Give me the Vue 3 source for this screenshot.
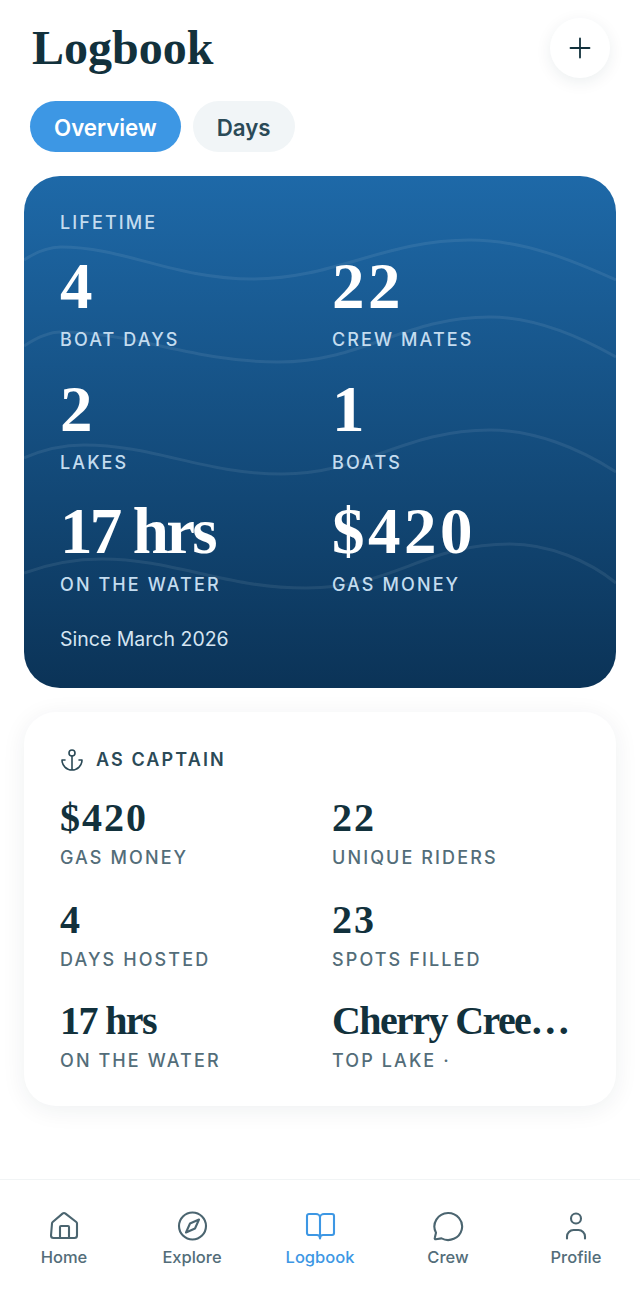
<script setup>
const hero = [
  { value: '4', label: 'BOAT DAYS' },
  { value: '22', label: 'CREW MATES' },
  { value: '2', label: 'LAKES' },
  { value: '1', label: 'BOATS' },
  { value: '17 hrs', label: 'ON THE WATER', tight: true },
  { value: '$420', label: 'GAS MONEY' },
]
const captain = [
  { value: '$420', label: 'GAS MONEY' },
  { value: '22', label: 'UNIQUE RIDERS' },
  { value: '4', label: 'DAYS HOSTED' },
  { value: '23', label: 'SPOTS FILLED' },
  { value: '17 hrs', label: 'ON THE WATER', tight: true },
  { value: 'Cherry Cree…', label: 'TOP LAKE ·', tight: true },
]
const waves = [
  'M0 84C12 76 25 71 37 71C100 71 150 103 229 103C310 103 360 64 446 64C500 64 550 85 592 104',
  'M0 170C12 162 25 156 37 156C110 156 170 186 254 186C340 186 380 141 466 141C510 141 555 160 592 181',
  'M0 282C18 274 38 269 60 269C130 269 180 298 258 298C340 298 380 254 466 254C510 254 555 272 592 296',
  'M0 397C22 389 50 383 78 383C150 383 200 412 282 412C370 412 400 368 486 368C525 368 565 385 592 407',
]
</script>

<template>
  <div class="page">
    <header class="top">
      <h1>Logbook</h1>
      <button class="add" aria-label="Add">
        <svg width="24" height="24" viewBox="0 0 24 24" fill="none" stroke="#12313c" stroke-width="1.800" stroke-linecap="round"><path d="M12 2.500v19M2.500 12h19"/></svg>
      </button>
    </header>
    <div class="tabs">
      <span class="tab active">Overview</span>
      <span class="tab">Days</span>
    </div>

    <section class="hero">
      <svg class="waves" width="592" height="512" viewBox="0 0 592 512" fill="none" stroke="#fff" stroke-opacity=".08" stroke-width="3">
        <path v-for="d in waves" :key="d" :d="d"/>
      </svg>
      <div class="eyebrow">LIFETIME</div>
      <div class="hero-grid">
        <div v-for="s in hero" :key="s.label" class="hero-stat">
          <div class="hero-value" :class="{ tight: s.tight }">{{ s.value }}</div>
          <div class="hero-label">{{ s.label }}</div>
        </div>
      </div>
      <div class="since">Since March 2026</div>
    </section>

    <section class="card">
      <div class="card-head">
        <svg width="24" height="24" viewBox="0 0 24 24" fill="none" stroke="#2b4a57" stroke-width="1.600" stroke-linecap="round" stroke-linejoin="round"><circle cx="12" cy="5" r="3"/><path d="M12 8v14M5 12H2a10 10 0 0 0 20 0h-3"/></svg>
        <span>AS CAPTAIN</span>
      </div>
      <div class="card-grid">
        <div v-for="s in captain" :key="s.label" class="card-stat">
          <div class="card-value" :class="{ tight: s.tight }">{{ s.value }}</div>
          <div class="card-label">{{ s.label }}</div>
        </div>
      </div>
    </section>

    <nav class="nav">
      <div class="nav-item">
        <svg viewBox="0 0 32 32"><path d="M4 13.500a2 2 0 0 1 .7-1.500L14.500 3.600a2.400 2.400 0 0 1 3 0L28.300 12a2 2 0 0 1 .7 1.500V25.500a2.500 2.500 0 0 1-2.500 2.500h-21A2.500 2.500 0 0 1 3 25.500Z"/><path d="M12 28V17a1 1 0 0 1 1-1h7a1 1 0 0 1 1 1v11"/></svg>
        <span>Home</span>
      </div>
      <div class="nav-item">
        <svg viewBox="0 0 32 32"><circle cx="16.500" cy="16" r="13.500"/><path d="M23 9.500l-4 9-9 4 4-9Z"/></svg>
        <span>Explore</span>
      </div>
      <div class="nav-item on">
        <svg viewBox="0 0 32 32"><path d="M16 7.500c0-2 2-3.500 4-3.500h8a2 2 0 0 1 2 2v17a2 2 0 0 1-2 2h-9c-1.500 0-3 1.500-3 3.500 0-2-1.500-3.500-3-3.500H5a2 2 0 0 1-2-2V6a2 2 0 0 1 2-2h7c2 0 4 1.500 4 3.500Zm0 0V28.500"/></svg>
        <span>Logbook</span>
      </div>
      <div class="nav-item">
        <svg viewBox="0 0 32 32"><path d="M16 3a14 13.500 0 1 1-6.500 25.400L3.800 29.200c-.9 0-1.300-.6-1-1.400l1.200-5.100A14 13.500 0 0 1 16 3Z"/></svg>
        <span>Crew</span>
      </div>
      <div class="nav-item">
        <svg viewBox="0 0 32 32"><circle cx="16" cy="8.500" r="5"/><path d="M7 28.500v-2a6.500 6.500 0 0 1 6.500-6.500h5a6.500 6.500 0 0 1 6.500 6.500v2"/></svg>
        <span>Profile</span>
      </div>
    </nav>
  </div>
</template>

<style>
html, body { margin: 0; background: #fff; }
</style>

<style scoped>
.page {
  height: 1314px;
  width: 640px;
  display: flex;
  flex-direction: column;
  background: #fff;
  font-family: Inter, "Liberation Sans", sans-serif;
  overflow: hidden;
}
.top {
  display: flex;
  justify-content: space-between;
  align-items: center;
  padding: 18px 30px 0 32px;
  height: 60px;
}
h1 {
  margin: 0;
  font: 700 48px/60px "Liberation Serif", serif;
  color: #12313c;
}
.add {
  width: 60px;
  height: 60px;
  padding: 0;
  border: 0;
  border-radius: 50%;
  background: #fff;
  box-shadow: 0 4px 16px rgba(18, 49, 60, .08);
  display: flex;
  align-items: center;
  justify-content: center;
}
.tabs {
  display: flex;
  gap: 12px;
  padding: 23px 30px 24px;
}
.tab {
  height: 51px;
  line-height: 53px;
  padding: 0 24px;
  border-radius: 26px;
  background: #f1f5f7;
  color: #2b4a57;
  font-size: 22.300px;
  font-weight: 600;
}
.tab.active { background: #3d97e4; color: #fff; }
.hero {
  position: relative;
  margin: 0 24px;
  height: 512px;
  box-sizing: border-box;
  padding: 36px 36px 0;
  border-radius: 36px;
  overflow: hidden;
  color: #fff;
  background: linear-gradient(180deg, #1e69a8 0%, #0b3357 100%);
}
.waves { position: absolute; left: 0; top: 0; }
.eyebrow, .hero-grid, .since { position: relative; }
.eyebrow {
  font-size: 18px;
  line-height: 22px;
  font-weight: 500;
  letter-spacing: 2.100px;
  color: #c4dcef;
}
.hero-grid {
  display: grid;
  grid-template-columns: 248px 248px;
  column-gap: 24px;
  row-gap: 18.500px;
  margin-top: 13px;
}
.hero-value {
  font: 700 65px/78px "Liberation Serif", serif;
  letter-spacing: 3.500px;
}
.hero-value.tight { letter-spacing: -2.800px; }
.hero-label {
  margin-top: 4px;
  font-size: 18px;
  line-height: 22px;
  font-weight: 500;
  letter-spacing: 2.100px;
  color: #c4dcef;
}
.since {
  margin-top: 31px;
  font-size: 19.500px;
  line-height: 24px;
  color: #d5e5f2;
}
.card {
  margin: 24px 24px 0;
  height: 394px;
  box-sizing: border-box;
  padding: 36px 36px 0;
  border-radius: 32px;
  background: #fff;
  box-shadow: 0 4px 24px rgba(18, 49, 60, .07);
}
.card-head {
  display: flex;
  align-items: center;
  gap: 12px;
  font-size: 18px;
  line-height: 24px;
  font-weight: 600;
  letter-spacing: 2.100px;
  color: #2b4a57;
}
.card-grid {
  display: grid;
  grid-template-columns: 248px 248px;
  column-gap: 24px;
  row-gap: 27.500px;
  margin-top: 23px;
}
.card-stat { min-width: 0; }
.card-value {
  font: 700 40px/46px "Liberation Serif", serif;
  letter-spacing: 2px;
  color: #12313c;
  white-space: nowrap;
}
.card-value.tight { letter-spacing: -1.600px; }
.card-label {
  margin-top: 6px;
  font-size: 18px;
  line-height: 22px;
  font-weight: 500;
  letter-spacing: 2.100px;
  color: #536d79;
}
.nav {
  margin-top: auto;
  height: 135px;
  box-sizing: border-box;
  padding-top: 30px;
  border-top: 1px solid #f1f4f5;
  display: grid;
  grid-template-columns: repeat(5, 1fr);
}
.nav-item {
  display: flex;
  flex-direction: column;
  align-items: center;
  gap: 5px;
  font-size: 16.500px;
  line-height: 20px;
  font-weight: 500;
  color: #536d79;
}
.nav-item svg {
  width: 32px;
  height: 32px;
  fill: none;
  stroke: #4b6570;
  stroke-width: 2.100;
  stroke-linecap: round;
  stroke-linejoin: round;
}
.nav-item.on { color: #3d97e4; }
.nav-item.on svg { stroke: #3d97e4; }
</style>
